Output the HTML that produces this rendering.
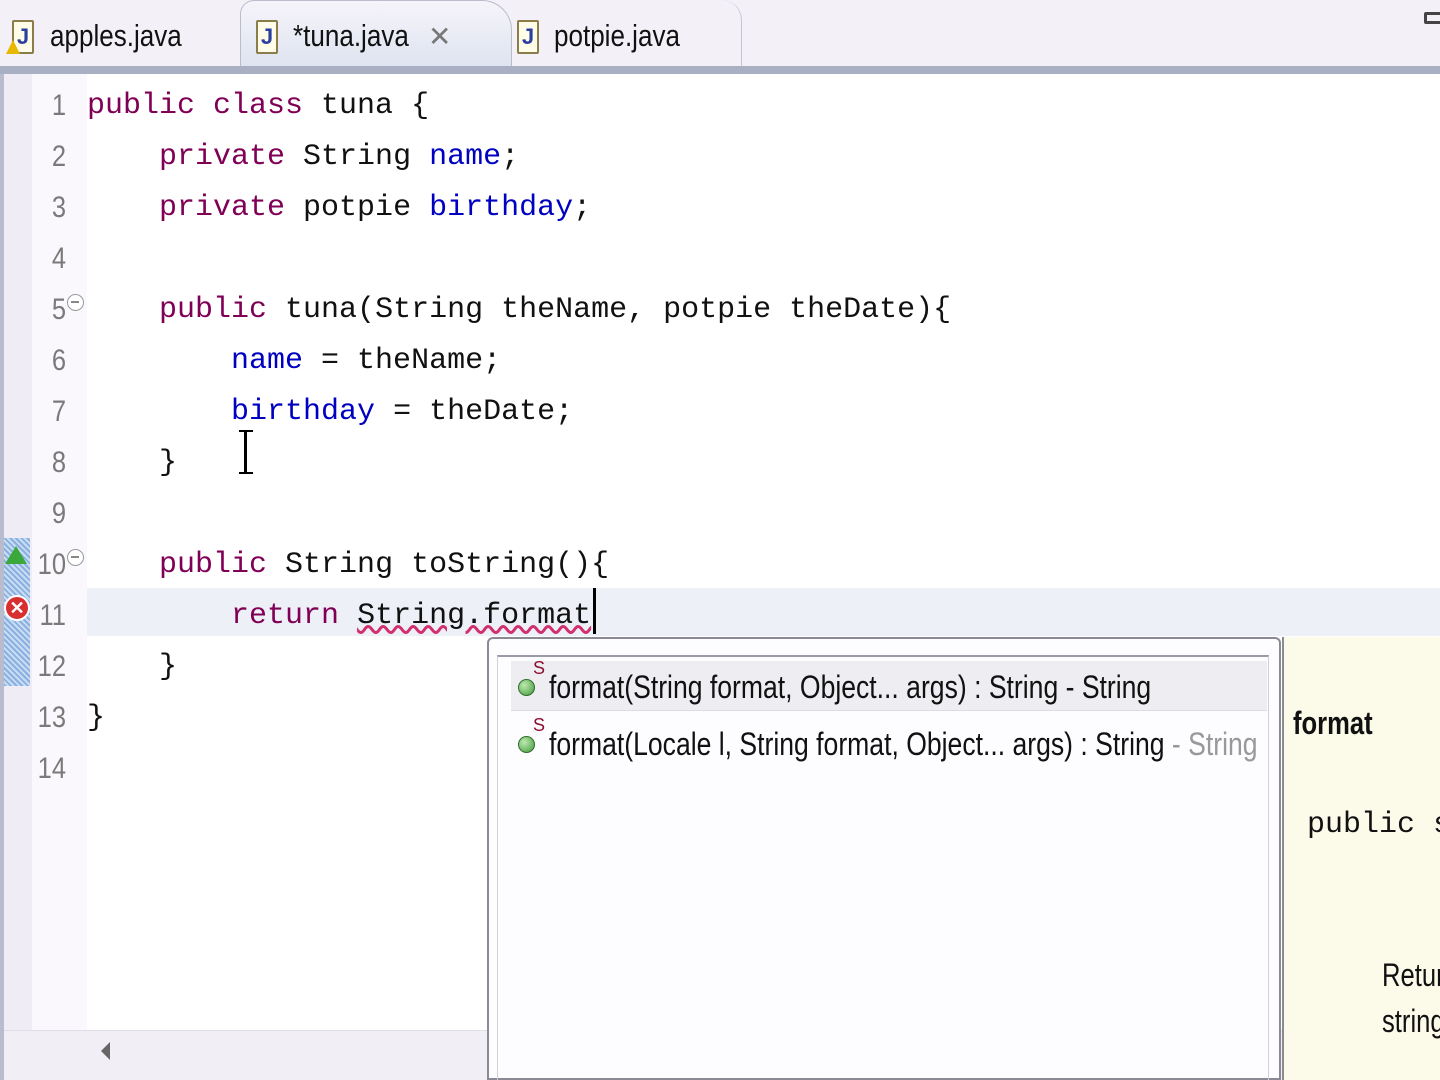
<!DOCTYPE html>
<html><head><meta charset="utf-8"><style>
*{margin:0;padding:0;box-sizing:border-box}
body{width:1440px;height:1080px;overflow:hidden;background:#fff;position:relative;font-family:"Liberation Sans",sans-serif}
.tabs{position:absolute;left:0;top:0;width:1440px;height:66px;background:#f4f0f8}
.tabline{position:absolute;left:0;top:66px;width:1440px;height:8px;background:#a9b0c4}
.tab{position:absolute;top:18px;font-size:31px;color:#111;white-space:nowrap;transform:scaleX(.84);transform-origin:left}
.active{position:absolute;left:240px;top:0;width:272px;height:70px;background:linear-gradient(#f6f4fa,#dde3f0);border:1px solid #b8bccc;border-bottom:none;border-radius:14px 30px 0 0}
.otab{position:absolute;left:512px;top:0;width:230px;height:66px;border-right:1px solid #c8c4d2;border-radius:0 20px 0 0}
.jicon{position:absolute;top:20px;width:22px;height:34px;background:#fffde8;border:2px solid #8a7d4a;border-radius:2px;color:#2a3fa0;font:bold 22px "Liberation Sans";text-align:center;line-height:30px}
.gut1{position:absolute;left:0;top:74px;width:4px;height:1006px;background:#b8bccc}
.gut2{position:absolute;left:4px;top:74px;width:28px;height:956px;background:#f0ecf6}
.gut3{position:absolute;left:32px;top:74px;width:55px;height:956px;background:#faf8fc}
.cur{position:absolute;left:87px;top:588px;width:1353px;height:48px;background:#eef0f8}
.ln{position:absolute;left:30px;width:36px;text-align:right;font-size:30px;color:#7a7a7a;transform:scaleX(.85);transform-origin:right}
.code{position:absolute;left:87px;font-family:"Liberation Mono",monospace;font-size:30px;white-space:pre;color:#111}
.k{color:#7f0055}
.f{color:#0000c0}
.fold{position:absolute;left:67px;width:17px;height:17px;border:1.5px solid #999;border-radius:50%;background:#fff}
.fold:after{content:"";position:absolute;left:3px;top:6px;width:8px;height:2px;background:#888}
.popup{position:absolute;left:487px;top:637px;width:794px;height:443px;background:#fdfcfe;border:2px solid #8a8a94;border-radius:6px 6px 0 0}
.inner{position:absolute;left:497px;top:655px;width:772px;height:425px;border-top:2px solid #9a9aa6;border-left:1px solid #d0d0d8;border-right:1px solid #d0d0d8}
.sel{position:absolute;left:511px;top:661px;width:756px;height:50px;background:#eeedf2;border-bottom:1px solid #dcdce4}
.item{position:absolute;left:549px;font-size:32px;color:#111;white-space:nowrap;transform:scaleX(.83);transform-origin:left}
.dot{position:absolute;left:518px;width:17px;height:17px;border-radius:50%;background:radial-gradient(circle at 35% 35%,#bfe8b0,#3f9a3a);border:1px solid #2e6e2a}
.s{position:absolute;left:533px;font-size:18px;color:#8b1030}
.doc{position:absolute;left:1282px;top:637px;width:158px;height:443px;background:#fcfbea;border-left:2px solid #8a8a94}
.hs{position:absolute;left:0;top:1030px;width:1440px;height:50px;background:#f2eef5;border-top:1px solid #e0dce6}
</style></head><body>
<div class="tabs"></div>
<div class="active"></div>
<div class="otab"></div>
<div class="tabline"></div>
<div class="jicon" style="left:12px">J</div>
<div style="position:absolute;left:6px;top:40px;width:0;height:0;border-left:7px solid transparent;border-right:7px solid transparent;border-bottom:14px solid #e8b800"></div>
<div class="tab" style="left:50px">apples.java</div>
<div class="jicon" style="left:256px">J</div>
<div class="tab" style="left:293px">*tuna.java</div>
<div style="position:absolute;left:428px;top:20px;font-size:28px;color:#777">✕</div>
<div class="jicon" style="left:517px">J</div>
<div class="tab" style="left:554px">potpie.java</div>
<div style="position:absolute;left:1424px;top:12px;width:20px;height:12px;border:3px solid #444;border-radius:2px"></div>

<div class="hs"></div>
<div class="gut1"></div><div class="gut2"></div><div class="gut3"></div>
<div class="cur"></div>
<div style="position:absolute;left:4px;top:538px;width:26px;height:148px;background:repeating-linear-gradient(45deg,#8ab0e0 0 2px,#c8dcf4 2px 4px)"></div>

<div class="ln" style="top:89px">1</div>
<div class="ln" style="top:140px">2</div>
<div class="ln" style="top:191px">3</div>
<div class="ln" style="top:242px">4</div>
<div class="ln" style="top:293px">5</div>
<div class="ln" style="top:344px">6</div>
<div class="ln" style="top:395px">7</div>
<div class="ln" style="top:446px">8</div>
<div class="ln" style="top:497px">9</div>
<div class="ln" style="top:548px">10</div>
<div class="ln" style="top:599px">11</div>
<div class="ln" style="top:650px">12</div>
<div class="ln" style="top:701px">13</div>
<div class="ln" style="top:752px">14</div>
<div class="fold" style="top:294px"></div>
<div class="fold" style="top:549px"></div>
<div style="position:absolute;left:5px;top:546px;width:0;height:0;border-left:11px solid transparent;border-right:11px solid transparent;border-bottom:18px solid #3aa83a"></div>
<div style="position:absolute;left:4px;top:595px;width:26px;height:26px;border-radius:50%;background:#d83030;border:2px solid #fff;color:#fff;font:bold 18px 'Liberation Sans';text-align:center;line-height:22px">✕</div>

<div class="code" style="top:89px"><span class="k">public class</span> tuna {</div>
<div class="code" style="top:140px">    <span class="k">private</span> String <span class="f">name</span>;</div>
<div class="code" style="top:191px">    <span class="k">private</span> potpie <span class="f">birthday</span>;</div>
<div class="code" style="top:293px">    <span class="k">public</span> tuna(String theName, potpie theDate){</div>
<div class="code" style="top:344px">        <span class="f">name</span> = theName;</div>
<div class="code" style="top:395px">        <span class="f">birthday</span> = theDate;</div>
<div class="code" style="top:446px">    }</div>
<div class="code" style="top:548px">    <span class="k">public</span> String toString(){</div>
<div class="code" style="top:599px">        <span class="k">return</span> <span style="text-decoration:underline wavy #d03070">String.format</span></div>
<div class="code" style="top:650px">    }</div>
<div class="code" style="top:701px">}</div>
<div style="position:absolute;left:593px;top:588px;width:3px;height:46px;background:#000"></div>
<div style="position:absolute;left:239px;top:430px;width:14px;height:44px;border-top:2px solid #000;border-bottom:2px solid #000"><div style="position:absolute;left:5px;top:0;width:3px;height:40px;background:#000"></div></div>

<div style="position:absolute;left:101px;top:1042px;width:0;height:0;border-top:9px solid transparent;border-bottom:9px solid transparent;border-right:9px solid #666"></div>

<div class="popup"></div>
<div class="inner"></div>
<div class="sel"></div>
<div class="dot" style="top:679px"></div><div class="s" style="top:658px">S</div>
<div class="item" style="top:669px">format(String format, Object... args) : String - String</div>
<div class="dot" style="top:736px"></div><div class="s" style="top:715px">S</div>
<div class="item" style="top:726px">format(Locale l, String format, Object... args) : String <span style="color:#999">- String</span></div>

<div class="doc"></div>
<div style="position:absolute;left:1293px;top:705px;font-size:32px;font-weight:bold;color:#111;transform:scaleX(.8);transform-origin:left">format</div>
<div style="position:absolute;left:1307px;top:808px;font-family:'Liberation Mono',monospace;font-size:30px;color:#111;white-space:nowrap">public st</div>
<div style="position:absolute;left:1382px;top:952px;font-size:32px;color:#111;transform:scaleX(.8);transform-origin:left;line-height:46px">Retur<br>string</div>
</body></html>
